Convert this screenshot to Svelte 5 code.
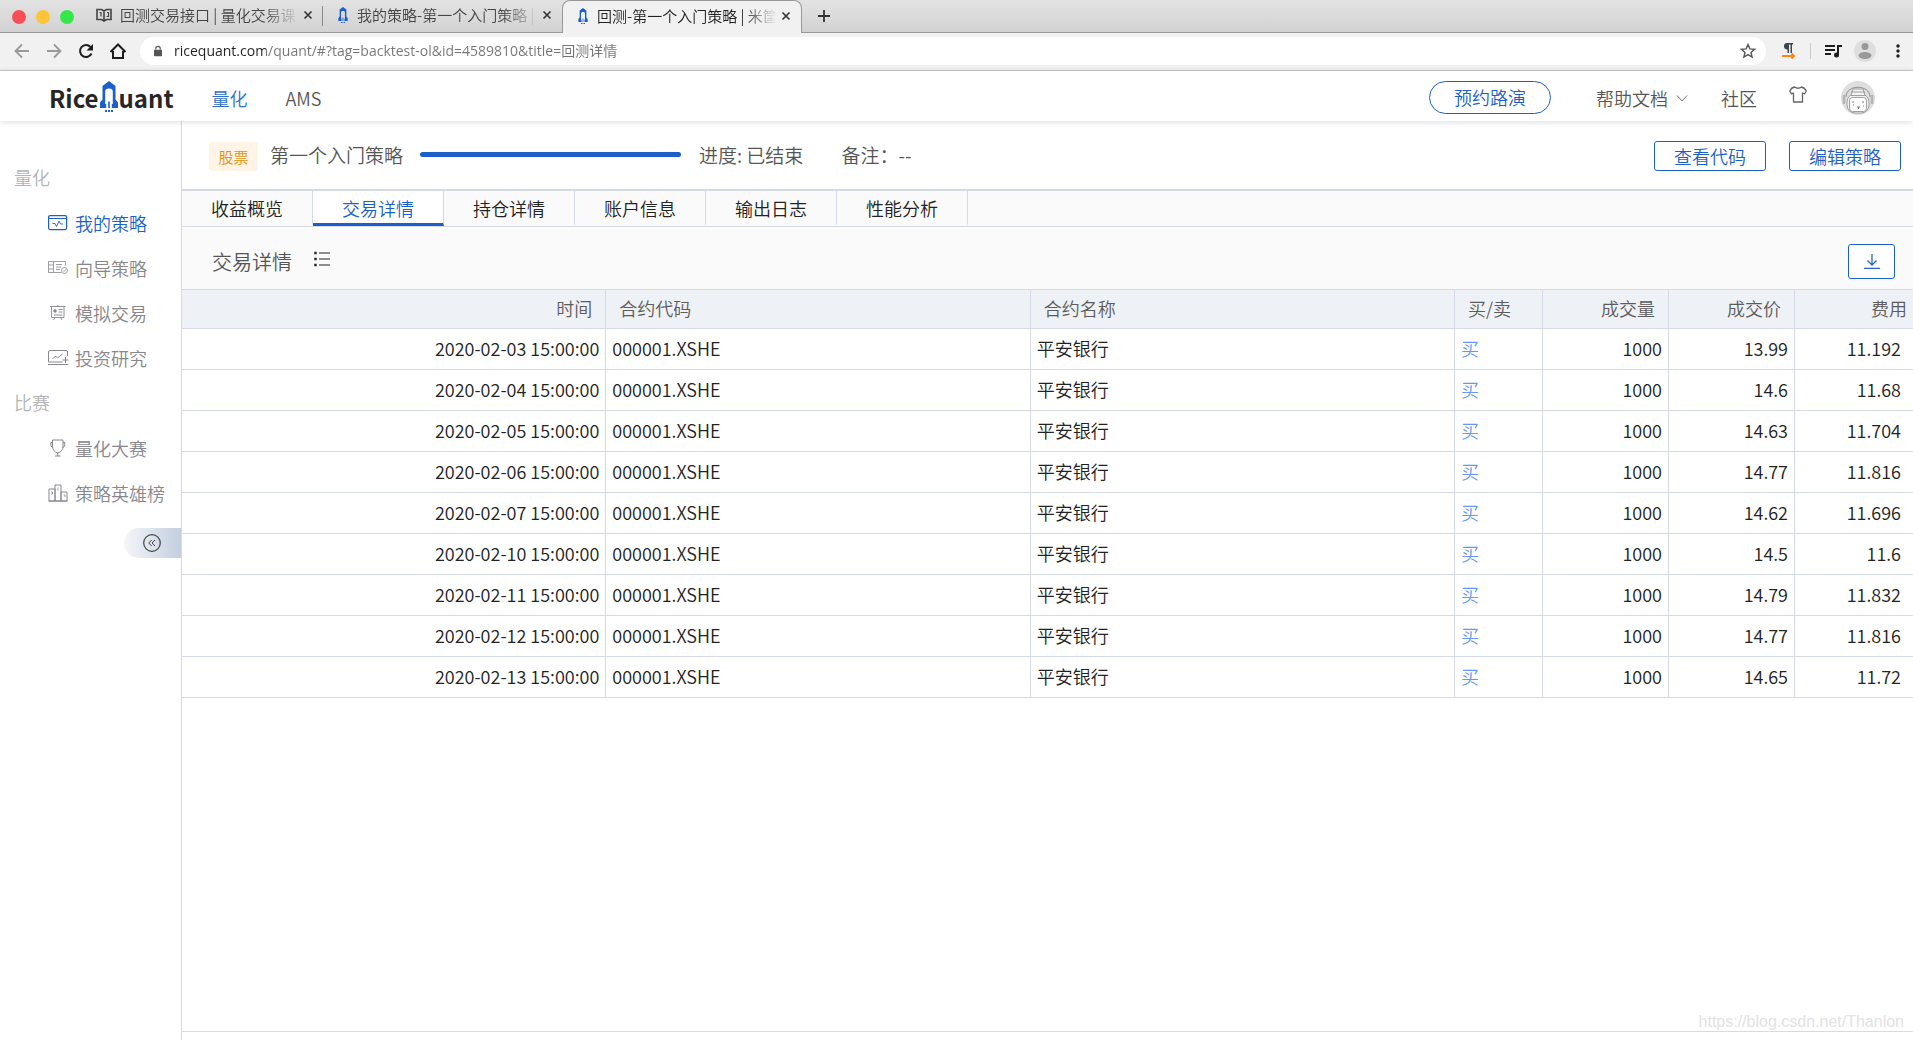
<script>
  const browserTabs = [
    { title: '回测交易接口 | 量化交易课', icon: 'book', active: false },
    { title: '我的策略-第一个入门策略 |', icon: 'rocket', active: false },
    { title: '回测-第一个入门策略 | 米筐', icon: 'rocket', active: true }
  ];

  const menu = [
    {
      heading: '量化',
      items: [
        { label: '我的策略', icon: 'strategy', active: true },
        { label: '向导策略', icon: 'wizard' },
        { label: '模拟交易', icon: 'paper' },
        { label: '投资研究', icon: 'research' }
      ]
    },
    {
      heading: '比赛',
      items: [
        { label: '量化大赛', icon: 'trophy' },
        { label: '策略英雄榜', icon: 'podium' }
      ]
    }
  ];

  const tabs = ['收益概览', '交易详情', '持仓详情', '账户信息', '输出日志', '性能分析'];
  let current = $state('交易详情');
  let url = $state('ricequant.com/quant/#?tag=backtest-ol&id=4589810&title=回测详情');

  const trades = [
    ['2020-02-03', '13.99', '11.192'],
    ['2020-02-04', '14.6', '11.68'],
    ['2020-02-05', '14.63', '11.704'],
    ['2020-02-06', '14.77', '11.816'],
    ['2020-02-07', '14.62', '11.696'],
    ['2020-02-10', '14.5', '11.6'],
    ['2020-02-11', '14.79', '11.832'],
    ['2020-02-12', '14.77', '11.816'],
    ['2020-02-13', '14.65', '11.72']
  ];
</script>

{#snippet rocket(cls)}
  <svg class={cls} viewBox="0 0 20 31" aria-hidden="true">
    <path fill="#1c5fc9" fill-rule="evenodd" d="M10 0 16.500 5V18.500L19 21.500V27H12.800V20.500H10.800V27H9.200V20.500H7.200V27H1V21.500L3.500 18.500V5zM6.200 23V10.500Q6.200 7.500 10 7.500T13.800 10.500V23H12.800V20.500H7.200V23z" />
    <path stroke="#1c5fc9" stroke-width="2" stroke-dasharray="2 1" d="M6 30h8" />
  </svg>
{/snippet}

<div class="window">
  <div class="tabstrip">
    <div class="lights"><i class="red"></i><i class="yellow"></i><i class="green"></i></div>
    {#each browserTabs as tab}
      <div class="btab" class:on={tab.active}>
        {#if tab.icon === 'book'}
          <svg class="book" viewBox="0 0 16 14" fill="none" stroke="#444" stroke-width="1.600" aria-hidden="true">
            <path d="M1 1.500h4.500L8 3l2.500-1.500H15v10h-4.500L8 13l-2.500-1.500H1zM8 3v9" />
            <path stroke-width="1.200" d="M3.500 4.500h1.500v4M10.500 8.500h2v-4h-1.500" />
          </svg>
        {:else}
          {@render rocket('mini')}
        {/if}
        <span class="btitle">{tab.title}</span>
        <button class="close" aria-label="关闭标签页">
          <svg viewBox="0 0 10 10" stroke="#333" stroke-width="1.600"><path d="M1.500 1.500l7 7M8.500 1.500l-7 7" /></svg>
        </button>
      </div>
    {/each}
    <button class="plus" aria-label="新标签页">
      <svg viewBox="0 0 12 12" stroke="#333" stroke-width="1.800"><path d="M6 0v12M0 6h12" /></svg>
    </button>
  </div>

  <div class="toolbar">
    <button class="tool" aria-label="后退">
      <svg viewBox="0 0 16 16" fill="none" stroke="#999" stroke-width="1.800"><path d="M15 8H2M8 1.500 1.500 8 8 14.500" /></svg>
    </button>
    <button class="tool" aria-label="前进">
      <svg viewBox="0 0 16 16" fill="none" stroke="#999" stroke-width="1.800"><path d="M1 8h13M8 1.500 14.500 8 8 14.500" /></svg>
    </button>
    <button class="tool" aria-label="重新加载">
      <svg viewBox="0 0 16 16" fill="none" stroke="#1d1d1d" stroke-width="2"><path d="M13.500 10.500A6 6 0 1 1 12.500 4" /><path fill="#1d1d1d" stroke="none" d="M15 1v6.500H8.500z" /></svg>
    </button>
    <button class="tool home" aria-label="主页">
      <svg viewBox="0 0 16 16" fill="none" stroke="#1d1d1d" stroke-width="2"><path d="M0.500 9 8 1.500 15.500 9M3 8v7h10V8" /></svg>
    </button>
    <div class="omnibox">
      <svg class="lock" viewBox="0 0 10 13" aria-hidden="true"><path fill="#555" d="M1 5h8q1 0 1 1v6q0 1-1 1H1q-1 0-1-1V6q0-1 1-1z" /><path fill="none" stroke="#555" stroke-width="1.400" d="M2.200 5V3.500a2.800 2.800 0 0 1 5.600 0V5" /></svg>
      <input class="url" aria-label="地址栏" bind:value={url} spellcheck="false" />
      <svg class="star" viewBox="0 0 16 16" fill="none" stroke="#555" stroke-width="1.400" aria-hidden="true"><path d="M8 1.500l1.900 4.400 4.700.4-3.600 3.100 1.100 4.700L8 11.600l-4.100 2.500L5 9.400 1.400 6.300l4.700-.4z" /></svg>
    </div>
    <button class="ext" aria-label="扩展程序">
      <svg viewBox="0 0 14 16"><path fill="#37474f" d="M5 0h6v1.500h-1V10H8.500V1.500H7V10H5.500V6.500A3.200 3.200 0 0 1 5 0z" /><path fill="none" stroke="#ff8411" stroke-width="1.800" d="M0 13h12M9.500 10.500 12 13l-2.500 2.500" /></svg>
    </button>
    <span class="vline"></span>
    <button class="ext media" aria-label="媒体控制">
      <svg viewBox="0 0 17 14" fill="none" stroke="#1d1d1d" stroke-width="2"><path d="M0 2h10M0 6h10M0 10h6M13 11V2h4" /><circle cx="11.500" cy="11" r="2.500" fill="#1d1d1d" stroke="none" /></svg>
    </button>
    <button class="profile" aria-label="个人资料">
      <svg viewBox="0 0 22 22" fill="#999"><circle cx="11" cy="11" r="11" fill="#dedede" /><circle cx="11" cy="6.500" r="3.500" /><ellipse cx="11" cy="15.500" rx="6.500" ry="3.500" /></svg>
    </button>
    <button class="dots" aria-label="菜单">
      <svg viewBox="0 0 4 14" fill="#1d1d1d"><circle cx="2" cy="2" r="1.700" /><circle cx="2" cy="7" r="1.700" /><circle cx="2" cy="12" r="1.700" /></svg>
    </button>
  </div>

  <header class="site">
    <a class="logo" href="#home" aria-label="RiceQuant">
      <span>Rice</span>{@render rocket('big')}<span>uant</span>
    </a>
    <nav class="main">
      <a class="on" href="#quant">量化</a>
      <a href="#ams">AMS</a>
    </nav>
    <button class="roadshow">预约路演</button>
    <a class="help" href="#docs">帮助文档
      <svg viewBox="0 0 12 7" fill="none" stroke="#777"><path d="M1 .5l5 5.500 5-5.500" /></svg>
    </a>
    <a class="community" href="#community">社区</a>
    <button class="shirt" aria-label="主题">
      <svg viewBox="0 0 18 17" fill="none" stroke="#666" stroke-width="1.300" stroke-linejoin="round"><path d="M5.500 1Q9 3.500 12.500 1 15.500 1.500 17.300 5L15.500 7.800 13.500 7V16H4.500V7L2.500 7.800.7 5Q2.500 1.500 5.500 1z" /></svg>
    </button>
    <button class="avatar" aria-label="账户">
      <svg viewBox="0 0 34 34" fill="none" stroke="#a0a0a0">
        <circle cx="17" cy="17" r="17" fill="#dedede" stroke="none" />
        <path stroke="#8f8f8f" d="M5 16C5 3 29 3 29 16" />
        <rect x="6" y="13" width="22" height="19" rx="8" fill="#f1f1f1" />
        <rect x="8.500" y="16.500" width="17" height="14" rx="3" fill="#fff" />
        <path fill="#f3f3f3" d="M10 14.500 12 8h10l2 6.500zM10 11h14" />
        <path stroke-width="2.500" stroke="#b5b5b5" d="M3 14v9M31 14v9" />
        <path stroke="#777" d="M11 21h2M21 21h2M16 26h3M17.500 26v2M12 24h1M22 25h1" />
      </svg>
    </button>
  </header>

  <div class="body">
    <aside>
      {#each menu as group}
        <h2>{group.heading}</h2>
        {#each group.items as item}
          <a class="item" class:on={item.active} href="#{item.icon}">
            <svg viewBox="0 0 20 18" fill="none" stroke="currentColor" aria-hidden="true">
              {#if item.icon === 'strategy'}
                <rect x=".6" y="1.600" width="18" height="14" rx="1.500" stroke-width="1.200" /><path d="M1 4.500h17.500" /><path d="M4.500 9.500h2.500l1.500 3L11 7l1.500 3h2.500" stroke-width=".9" />
              {:else if item.icon === 'wizard'}
                <path stroke-width=".8" d="M.5 2.500h5v11h-5zM.5 6h5M.5 10h5M5.500 2.500h12v4M5.500 13.500h8M8 5.500h6M8 8h5M8 10.500h4" /><circle cx="16.500" cy="11.500" r="3" stroke-width=".8" /><path stroke-width=".8" d="M15 11.500l1 1 2-2" />
              {:else if item.icon === 'paper'}
                <path stroke-width=".9" d="M2 2.500h15.500M3.500 2.500v11h12.500v-11M9.700 1v1.500M7 13.500 5.500 16M12.500 13.500 14 16M10.500 5.500h4M10.500 8h4M6 11h8.500" /><circle cx="7" cy="7" r="1.800" fill="currentColor" stroke="none" />
              {:else if item.icon === 'research'}
                <path stroke-width="1" d="M.5 13V3q0-1.500 1.500-1.500h16q1.500 0 1.500 1.500v4M0 15.500h20.500M.5 13h14M4.500 10l3-3 2 2 5-4M17.500 8v6M14.500 11h6" />
              {:else if item.icon === 'trophy'}
                <path d="M4.500 1h10.500v6q0 5.500-5.250 7Q4.500 12.500 4.500 7zM4.500 3.500H2.800q-.6 4 2 5.500M15 3.500h1.800q.6 4-2 5.500M9.750 14v3M7 17h5.500" />
              {:else}
                <path d="M1 17V5h6v12zM7 17V1h6v16zM13 17V8h6v9zM0.500 17h19" /><path stroke-width=".8" d="M3 8h1.500v2H3M10 3.500v3M15.500 11h1.500v2" />
              {/if}
            </svg>
            {item.label}
          </a>
        {/each}
      {/each}
      <button class="collapse" aria-label="收起侧栏">
        <svg viewBox="0 0 18 18" fill="none" stroke="#444"><circle cx="9" cy="9" r="8.300" stroke-width="1.200" /><path d="M8.700 6 5.700 9l3 3M12 6 9 9l3 3" /></svg>
      </button>
    </aside>

    <main>
      <section class="summary">
        <span class="tag">股票</span>
        <h1>第一个入门策略</h1>
        <div class="bar" role="progressbar" aria-label="回测进度" aria-valuenow="100"></div>
        <span class="state">进度: 已结束</span>
        <span class="note">备注：--</span>
        <div class="actions">
          <button>查看代码</button>
          <button>编辑策略</button>
        </div>
      </section>

      <div class="tabs" role="tablist">
        {#each tabs as tab}
          <button role="tab" aria-selected={current === tab} class:on={current === tab} onclick={() => (current = tab)}>{tab}</button>
        {/each}
      </div>

      <section class="panelhead">
        <h2>交易详情</h2>
        <button class="list" aria-label="列表设置">
          <svg viewBox="0 0 16 16" fill="none" stroke="#222" stroke-width="1.200"><path d="M5 2h11M5 8h11M5 14h11" /><path stroke-width="2.400" d="M.3 2h2.400M.3 8h2.400M.3 14h2.400" /></svg>
        </button>
        <button class="download" aria-label="下载">
          <svg viewBox="0 0 16 16" fill="none" stroke="#2a66c8" stroke-width="1.300"><path d="M8 0v11M3.500 6.500 8 11l4.500-4.500M0 14.300h16" /></svg>
        </button>
      </section>

      <table>
        <thead>
          <tr>
            <th class="r">时间</th>
            <th>合约代码</th>
            <th>合约名称</th>
            <th class="side">买/卖</th>
            <th class="r num">成交量</th>
            <th class="r num">成交价</th>
            <th class="r fee">费用</th>
          </tr>
        </thead>
        <tbody>
          {#each trades as [day, price, fee]}
            <tr>
              <td class="r">{day} 15:00:00</td>
              <td>000001.XSHE</td>
              <td>平安银行</td>
              <td class="buy">买</td>
              <td class="r">1000</td>
              <td class="r">{price}</td>
              <td class="r fee">{fee}</td>
            </tr>
          {/each}
        </tbody>
      </table>
      <div class="foot"></div>
    </main>
  </div>
  <span class="mark">https://blog.csdn.net/Thanlon</span>
</div>

<style>
  :global(body) {
    margin: 0;
    background: #fff;
  }
  .window {
    position: relative;
    min-height: 100vh;
    display: flex;
    flex-direction: column;
    font: 350 18px/24px 'Noto Sans CJK SC', sans-serif;
    color: #222;
  }
  .window :global(*) {
    box-sizing: border-box;
  }
  button {
    font: inherit;
    color: inherit;
    background: none;
    border: 0;
    padding: 0;
    cursor: pointer;
  }
  a {
    color: inherit;
    text-decoration: none;
  }
  svg {
    display: block;
    flex: none;
    overflow: visible;
  }
  h1,
  h2 {
    margin: 0;
    font-weight: 350;
  }

  .tabstrip {
    height: 33px;
    display: flex;
    background: linear-gradient(#e3e3e3, #d2d2d2);
    border-bottom: 1px solid #999;
  }
  .lights {
    width: 84px;
    display: flex;
    gap: 10px;
    align-items: center;
    padding: 2px 0 0 12px;
  }
  .lights i {
    width: 14px;
    height: 14px;
    border-radius: 50%;
  }
  .red {
    background: #f74f55;
  }
  .yellow {
    background: #fdc437;
  }
  .green {
    background: #35e84a;
  }
  .btab {
    width: 239px;
    height: 32px;
    display: flex;
    align-items: center;
    padding: 0 10px 2px 12px;
    font-size: 15px;
    color: #444;
    background: linear-gradient(#888, #888) right 6px / 1px 20px no-repeat;
  }
  .btab:has(+ .on) {
    background: none;
  }
  .btab.on {
    height: 33px;
    width: 240px;
    padding-bottom: 3px;
    background: #f1f1f1;
    border: 1px solid #999;
    border-bottom: 0;
    border-radius: 8px 8px 0 0;
    color: #222;
  }
  .book {
    width: 16px;
    height: 14px;
  }
  .mini {
    width: 12px;
    height: 16px;
    margin-left: 2px;
  }
  .btitle {
    flex: 1;
    margin: 0 4px 0 8px;
    white-space: nowrap;
    overflow: hidden;
    mask-image: linear-gradient(90deg, #000 calc(100% - 36px), transparent);
  }
  .close svg {
    width: 10px;
    height: 10px;
  }
  .plus {
    margin-left: 16px;
  }
  .plus svg {
    width: 12px;
    height: 12px;
  }

  .toolbar {
    height: 38px;
    display: flex;
    align-items: center;
    padding: 0 13px 1px 14px;
    background: #f1f1f1;
    border-bottom: 1px solid #c8c8c8;
  }
  .tool {
    margin-right: 16px;
  }
  .tool.home {
    margin-right: 14px;
  }
  .tool svg,
  .star {
    width: 16px;
    height: 16px;
  }
  .omnibox {
    flex: 1;
    height: 28px;
    display: flex;
    align-items: center;
    margin-right: 16px;
    padding: 0 10px 0 14px;
    border-radius: 14px;
    background: #fff;
  }
  .lock {
    width: 8px;
    height: 12px;
  }
  .url {
    flex: 1;
    border: 0;
    outline: 0;
    margin-left: 12px;
    padding: 0;
    font: 14px/20px 'Open Sans', 'Noto Sans CJK SC', sans-serif;
    background: linear-gradient(90deg, #222 92px, #757575 92px);
    background-clip: text;
    color: transparent;
    caret-color: #222;
  }
  .ext svg {
    width: 14px;
    height: 16px;
  }
  .ext.media svg {
    width: 17px;
    height: 14px;
  }
  .vline {
    width: 1px;
    height: 16px;
    margin: 0 14px;
    background: #ccc;
  }
  .profile {
    margin: 0 20px 0 12px;
  }
  .profile svg {
    width: 22px;
    height: 22px;
  }
  .dots svg {
    width: 4px;
    height: 14px;
  }

  .site {
    position: relative;
    height: 50px;
    display: flex;
    align-items: center;
    padding: 4px 38px 0 49px;
    background: #fff;
    box-shadow: 0 1px 6px rgba(0, 21, 41, 0.15);
    color: #555;
  }
  .logo {
    display: flex;
    align-items: center;
    font: bold 24px/32px 'Noto Sans CJK SC', sans-serif;
    color: #262626;
  }
  .big {
    width: 20px;
    height: 31px;
    margin-bottom: 4px;
  }
  .main {
    flex: 1;
    display: flex;
    gap: 38px;
    margin-left: 38px;
  }
  .main .on {
    color: #2f6fd0;
  }
  .roadshow {
    width: 122px;
    height: 33px;
    margin: 0 45px 2px 0;
    border: 1px solid #1c5fc9;
    border-radius: 17px;
    color: #1c5fc9;
    line-height: 30px;
  }
  .help {
    display: flex;
    align-items: center;
    gap: 8px;
    margin-right: 33px;
  }
  .help svg {
    width: 12px;
    height: 7px;
  }
  .community {
    margin-right: 32px;
  }
  .shirt {
    margin: 0 34px 8px 0;
  }
  .shirt svg {
    width: 18px;
    height: 17px;
  }
  .avatar svg {
    width: 34px;
    height: 34px;
  }

  .body {
    flex: 1;
    display: flex;
  }
  aside {
    width: 182px;
    flex: none;
    padding-top: 34px;
    border-right: 1px solid #d5dae6;
    color: #87878c;
  }
  aside h2 {
    padding-left: 14px;
    font-size: 18px;
    line-height: 45px;
    color: #b4b4b6;
  }
  .item {
    height: 45px;
    display: flex;
    align-items: center;
    gap: 7px;
    padding-left: 48px;
    white-space: nowrap;
  }
  .item svg {
    width: 20px;
    height: 18px;
  }
  .item.on {
    color: #1c5fc9;
  }
  .collapse {
    width: 57px;
    height: 30px;
    display: flex;
    align-items: center;
    margin: 13px 0 0 auto;
    padding-left: 19px;
    border-radius: 15px 0 0 15px;
    background: linear-gradient(90deg, #f4f6fa, #c3cfde);
  }
  .collapse svg {
    width: 18px;
    height: 18px;
  }

  main {
    flex: 1;
    min-width: 0;
    display: flex;
    flex-direction: column;
  }
  .summary {
    height: 70px;
    display: flex;
    align-items: center;
    padding: 0 12px 0 27px;
    border-bottom: 2px solid #d5dae6;
    font-size: 19px;
    color: #555;
    white-space: nowrap;
  }
  .tag {
    width: 49px;
    height: 29px;
    margin-top: 2px;
    border-radius: 3px;
    background: #fff4e5;
    color: #e8900c;
    font-size: 15px;
    line-height: 29px;
    text-align: center;
  }
  h1 {
    margin-left: 12px;
    font-size: 19px;
  }
  .bar {
    width: 261px;
    height: 5px;
    margin: 0 18px 2px 17px;
    border-radius: 3px;
    background: #1c5fc9;
  }
  .note {
    margin-left: 38px;
  }
  .actions {
    display: flex;
    gap: 23px;
    margin: 2px 0 0 auto;
  }
  .actions button {
    width: 112px;
    height: 30px;
    border: 1px solid #1c5fc9;
    border-radius: 3px;
    color: #1c5fc9;
    font-size: 18px;
    line-height: 28px;
  }
  .tabs {
    height: 36px;
    display: flex;
    background: #fafafa;
    border-bottom: 1px solid #d5dae6;
  }
  .tabs button {
    width: 131px;
    padding-top: 2px;
    border-right: 1px solid #d5dae6;
    border-bottom: 3px solid transparent;
  }
  .tabs .on {
    background: #fff;
    border-bottom-color: #1c5fc9;
    color: #1c5fc9;
  }
  .panelhead {
    height: 60px;
    display: flex;
    align-items: center;
    margin-top: 2px;
    padding: 5px 18px 0 30px;
    background: #fafafa;
  }
  .panelhead h2 {
    font-size: 20px;
    color: #555;
  }
  .list {
    margin: 0 0 6px 22px;
  }
  .list svg,
  .download svg {
    width: 16px;
    height: 16px;
  }
  .download {
    width: 47px;
    height: 35px;
    display: flex;
    align-items: center;
    justify-content: center;
    margin-left: auto;
    border: 1px solid #1c5fc9;
    border-radius: 3px;
    background: #fff;
  }

  table {
    width: 100%;
    table-layout: fixed;
    border-collapse: separate;
    border-spacing: 0;
  }
  th,
  td {
    height: 41px;
    padding: 0 6px 2px;
    border-right: 1px solid #d5dae6;
    border-bottom: 1px solid #d5dae6;
    text-align: left;
    white-space: nowrap;
  }
  th {
    height: 40px;
    padding: 0 13px 2px;
    border-top: 1px solid #d5dae6;
    background: #eef1f6;
    color: #5c5c5c;
    font-weight: 350;
  }
  .r {
    text-align: right;
  }
  .side {
    width: 88px;
  }
  .num {
    width: 126px;
  }
  .fee {
    width: 118px;
    border-right: 0;
    padding-right: 12px;
  }
  th.fee {
    padding-right: 6px;
  }
  .buy {
    color: #6598f5;
  }
  .foot {
    flex: 1;
    margin-bottom: 8px;
    border-bottom: 1px solid #d5dae6;
  }
  .mark {
    position: absolute;
    right: 9px;
    bottom: 8px;
    font: 16px/20px 'Liberation Sans', sans-serif;
    color: #e2e2e2;
  }
</style>
